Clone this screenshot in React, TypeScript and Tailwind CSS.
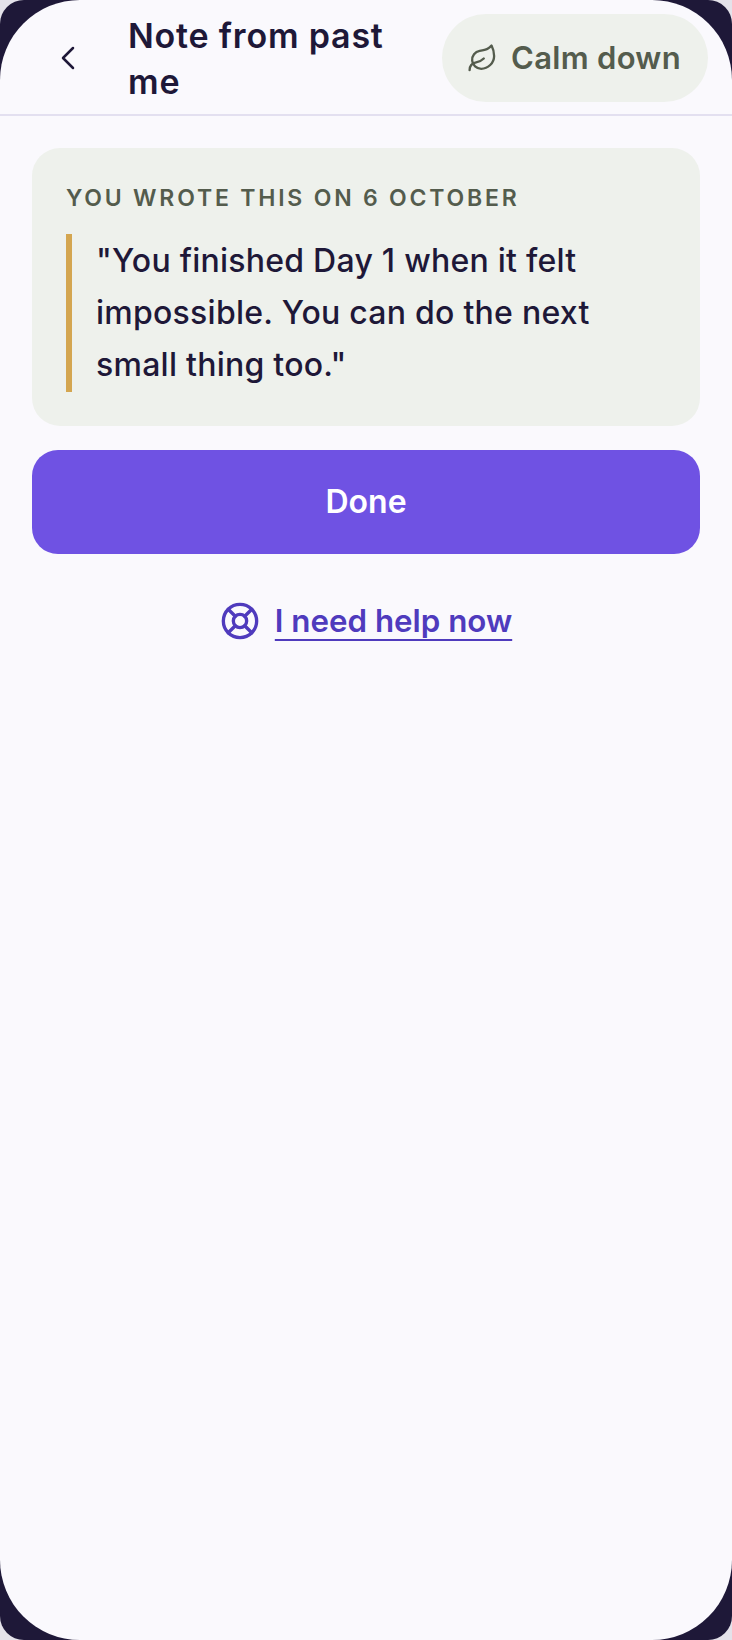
import { ChevronLeft, Leaf, LifeBuoy } from "lucide-react";

export default function App() {
  return (
    <div className="h-[1640px] w-[732px] overflow-hidden bg-[#e4e2ea] font-['Inter',sans-serif]">
      <div className="h-full rounded-[24px] bg-[#1e1838]">
        <div className="flex h-full flex-col rounded-[80px] bg-[#faf9fd]">
          {/* Header */}
          <header className="flex h-[116px] shrink-0 items-center border-b-2 border-[#e3e0f0] pt-[2px] pl-[44px] pr-6">
            <div className="flex h-12 w-12 items-center justify-center text-[#1e1838]">
              <ChevronLeft size={40} strokeWidth={1.5} />
            </div>
            <h1 className="mt-[1px] ml-[36px] w-[270px] text-[34px] leading-[46px] font-semibold tracking-[0.8px] text-[#1e1838]">
              Note from past me
            </h1>
            <button className="ml-auto flex h-[88px] w-[266px] shrink-0 items-center justify-center gap-[13px] rounded-full bg-[#eef1ec] pr-[2px] text-[31px] font-semibold tracking-[0.3px] text-[#545c4d]">
              <Leaf size={31} strokeWidth={1.8} />
              Calm down
            </button>
          </header>

          <main className="flex flex-col px-8 pt-[32px]">
            {/* Note card */}
            <section className="rounded-[28px] bg-[#eef1ec] px-[34px] pt-[37px] pb-[34px]">
              <p className="text-[23px] leading-[26px] font-semibold tracking-[2.8px] text-[#545c4d]">
                YOU WROTE THIS ON 6 OCTOBER
              </p>
              <blockquote className="mt-[23px] border-l-[6px] border-[#d4a650] py-[1px] pl-[24px] text-[32px] leading-[52px] font-medium tracking-[0.25px] text-[#1e1838]">
                "You finished Day 1 when it felt impossible. You can do the next small thing too."
              </blockquote>
            </section>

            <button className="mt-6 h-[104px] rounded-[26px] pb-[1px] bg-[#6f52e3] text-[32px] font-semibold text-white">
              Done
            </button>

            <a className="mt-[45px] flex items-center justify-center gap-[15px] text-[31.3px] leading-[44px] font-semibold text-[#4f3bbd]">
              <LifeBuoy size={40} strokeWidth={2} />
              <span className="underline decoration-2 underline-offset-[7px]">I need help now</span>
            </a>
          </main>
        </div>
      </div>
    </div>
  );
}
